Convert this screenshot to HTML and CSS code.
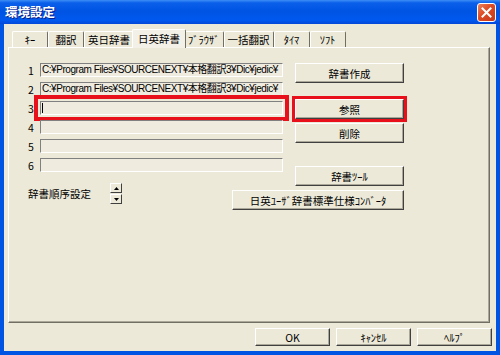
FILE: index.html
```html
<!DOCTYPE html>
<html lang="ja">
<head>
    <meta charset="UTF-8">
    <title>環境設定</title>
    <link rel="stylesheet" href="styles.css">
</head>
<body>
    <div class="window">
        <div class="titlebar">
            <span class="title">環境設定</span>
            <span class="close-btn">
                <svg width="11" height="11" viewBox="0 0 11 11">
                    <path d="M1.5 1.5 L9.5 9.5 M9.5 1.5 L1.5 9.5" stroke="#fff" stroke-width="2" stroke-linecap="square"/>
                </svg>
            </span>
        </div>

        <div class="dialog">
            <div class="tabs">
                <span class="tab">ｷｰ</span>
                <span class="tab">翻訳</span>
                <span class="tab">英日辞書</span>
                <span class="tab active">日英辞書</span>
                <span class="tab">ﾌﾞﾗｳｻﾞ</span>
                <span class="tab">一括翻訳</span>
                <span class="tab">ﾀｲﾏ</span>
                <span class="tab">ｿﾌﾄ</span>
            </div>

            <div class="panel">
                <div class="dict-top">
                    <div class="dict-list">
                        <div class="dict-row">
                            <span class="num">1</span>
                            <div class="field">C:¥Program Files¥SOURCENEXT¥本格翻訳3¥Dic¥jedic¥</div>
                        </div>
                        <div class="dict-row">
                            <span class="num">2</span>
                            <div class="field">C:¥Program Files¥SOURCENEXT¥本格翻訳3¥Dic¥jedic¥</div>
                        </div>
                        <div class="dict-row">
                            <span class="num">3</span>
                            <div class="field highlight"><span class="caret"></span></div>
                        </div>
                        <div class="dict-row">
                            <span class="num">4</span>
                            <div class="field"></div>
                        </div>
                        <div class="dict-row">
                            <span class="num">5</span>
                            <div class="field"></div>
                        </div>
                        <div class="dict-row">
                            <span class="num">6</span>
                            <div class="field"></div>
                        </div>
                    </div>

                    <div class="actions">
                        <button class="btn">辞書作成</button>
                        <button class="btn browse-btn highlight">参照</button>
                        <button class="btn delete-btn">削除</button>
                    </div>
                </div>

                <div class="dict-bottom">
                    <div class="order">
                        <span class="order-label">辞書順序設定</span>
                        <div class="spinner">
                            <button class="spin-btn">
                                <svg width="5" height="3" viewBox="0 0 5 3"><path d="M2.5 0 L5 3 L0 3 Z" fill="#000"/></svg>
                            </button>
                            <button class="spin-btn">
                                <svg width="5" height="3" viewBox="0 0 5 3"><path d="M0 0 L5 0 L2.5 3 Z" fill="#000"/></svg>
                            </button>
                        </div>
                    </div>
                    <div class="tools">
                        <button class="btn">辞書ﾂｰﾙ</button>
                        <button class="btn converter-btn">日英ﾕｰｻﾞ辞書標準仕様ｺﾝﾊﾞｰﾀ</button>
                    </div>
                </div>
            </div>

            <div class="footer">
                <button class="btn footer-btn">OK</button>
                <button class="btn footer-btn">ｷｬﾝｾﾙ</button>
                <button class="btn footer-btn">ﾍﾙﾌﾟ</button>
            </div>
        </div>
    </div>
</body>
</html>
```

FILE: styles.css
```css
body {
    margin: 0;
    font-family: "Noto Sans CJK JP", "Liberation Sans", sans-serif;
    font-size: 10.5px;
    color: #000;
    background: #ece9d8;
}

.window {
    width: 500px;
    height: 355px;
    display: flex;
    flex-direction: column;
}

/* XP style title bar */
.titlebar {
    height: 24px;
    display: flex;
    justify-content: space-between;
    align-items: flex-start;
    padding: 0 4px 0 5px;
    background: linear-gradient(to bottom, #3d8ef5 0, #0a5fea 12%, #0054e3 45%, #0058ee 85%, #0348d8 100%);
    box-sizing: border-box;
}

.title {
    color: white;
    font-weight: bold;
    font-size: 12.5px;
    line-height: 24px;
    text-shadow: 1px 1px 0 #0a1e8a;
}

.close-btn {
    width: 19px;
    height: 19px;
    margin-top: 3px;
    box-sizing: border-box;
    border: 1px solid #fff;
    border-radius: 3px;
    background: linear-gradient(135deg, #e9835e 0, #dd4a22 45%, #c5391b 100%);
    display: flex;
    align-items: center;
    justify-content: center;
}

.dialog {
    flex: 1;
    display: flex;
    flex-direction: column;
    padding: 5px 4px 5px 4px;
    border: 4px solid #0054e3;
    border-top: none;
    background: #ece9d8;
    min-height: 0;
}

/* tabs */
.tabs {
    height: 18px;
    display: flex;
    align-items: flex-end;
    margin-left: 4px;
}

.tab {
    height: 16px;
    min-width: 36px;
    box-sizing: border-box;
    padding: 0 3px;
    line-height: 15px;
    text-align: center;
    border: 1px solid;
    border-color: #fff #716f64 transparent #fff;
    border-bottom: none;
    border-radius: 2px 2px 0 0;
    background: #ece9d8;
}

.tab.active {
    position: relative;
    height: 19px;
    margin: 0 -2px -1px;
    padding: 0 5px;
    line-height: 17px;
    background: #f3f1e7;
}

.panel {
    flex: 1;
    margin-right: 2px;
    padding: 15px 19px 0 19px;
    border: 1px solid;
    border-color: #fff #716f64 #716f64 #fff;
    box-shadow: inset -1px -1px 0 #aca899;
}

.dict-top {
    display: flex;
    gap: 12px;
}

.dict-list {
    width: 255px;
    display: flex;
    flex-direction: column;
    gap: 5px;
}

.dict-row {
    display: flex;
    align-items: center;
    height: 14px;
}

.num {
    width: 12px;
}

.field {
    width: 243px;
    height: 14px;
    box-sizing: border-box;
    padding: 0 1px;
    border: 1px solid;
    border-color: #808080 #fff #fff #808080;
    background: #efecdf;
    font-family: "Liberation Sans", "Noto Sans CJK JP", sans-serif;
    font-size: 10px;
    letter-spacing: -0.45px;
    line-height: 12px;
    white-space: nowrap;
    overflow: hidden;
    display: flex;
    align-items: center;
}

.caret {
    width: 1px;
    height: 10px;
    background: #000;
}

.highlight {
    outline: 4px solid #e8101a;
}

.field.highlight {
    outline-offset: 2px;
}

.btn {
    font-family: "Noto Sans CJK JP", "Liberation Sans", sans-serif;
    font-size: 10.5px;
    height: 20px;
    padding: 0;
    background: #ece9d8;
    color: #000;
    border: 1px solid;
    border-color: #fff #404040 #404040 #fff;
    box-shadow: inset -1px -1px 0 #aca899;
    line-height: 17px;
}

.actions {
    width: 109px;
    display: flex;
    flex-direction: column;
}

.actions .btn {
    width: 100%;
}

.browse-btn {
    margin-top: 16px;
    outline-width: 3px;
}

.delete-btn {
    margin-top: 4px;
}

.dict-bottom {
    width: 376px;
    display: flex;
    justify-content: space-between;
    margin-top: -6px;
}

.order {
    display: flex;
    align-items: center;
    gap: 19px;
    margin-top: 17px;
    height: 21px;
}

.spinner {
    display: flex;
    flex-direction: column;
}

.spin-btn {
    width: 12px;
    height: 10px;
    padding: 0;
    background: #ece9d8;
    border: 1px solid;
    border-color: #fff #404040 #404040 #fff;
    display: flex;
    align-items: center;
    justify-content: center;
}

.spin-btn + .spin-btn {
    margin-top: 1px;
}

.tools {
    display: flex;
    flex-direction: column;
    align-items: flex-end;
}

.tools .btn {
    width: 109px;
}

.tools .converter-btn {
    width: 172px;
    margin-top: 4px;
}

.footer {
    display: flex;
    justify-content: flex-end;
    gap: 6px;
    margin-top: 5px;
}

.footer-btn {
    width: 75px;
    height: 18px;
    line-height: 15px;
}
```
